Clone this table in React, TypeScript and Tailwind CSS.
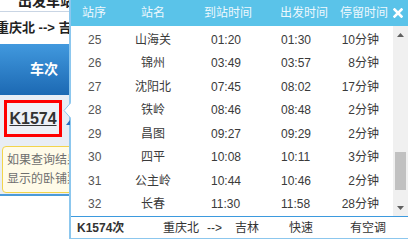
import React from "react";

const rows = [
  ["25", "山海关", "01:20", "01:30", "10分钟"],
  ["26", "锦州", "03:49", "03:57", "8分钟"],
  ["27", "沈阳北", "07:45", "08:02", "17分钟"],
  ["28", "铁岭", "08:46", "08:48", "2分钟"],
  ["29", "昌图", "09:27", "09:29", "2分钟"],
  ["30", "四平", "10:08", "10:11", "3分钟"],
  ["31", "公主岭", "10:44", "10:46", "2分钟"],
  ["32", "长春", "11:30", "11:58", "28分钟"],
];

const font = { fontFamily: '"Liberation Sans", "Noto Sans CJK SC", sans-serif' };

export default function App() {
  return (
    <div className="relative w-[408px] h-[240px] overflow-hidden bg-white" style={font}>
      {/* page behind */}
      <div className="w-[70px] flex flex-col">
        <div className="h-[11px] overflow-hidden bg-white">
          <div className="mt-[-7px] ml-[18px] whitespace-nowrap text-[14px] leading-[16px] font-bold text-[#222]">出发车站：</div>
        </div>
        <div className="h-px bg-[#c9d5e4]" />
        <div className="h-[32px] flex items-center bg-white">
          <div className="ml-[-4px] whitespace-nowrap text-[13px] font-bold text-[#222]">重庆北 --&gt; 吉林</div>
        </div>
        <div className="h-[51px] flex items-center justify-center bg-gradient-to-b from-[#4199de] to-[#1c69b3]">
          <span className="text-[14px] font-bold text-white pl-[18px]">车次</span>
        </div>
        <div className="h-[99px] bg-[#e8edf5] flex flex-col pt-[5px]">
          <div className="ml-[4px] w-[58px] h-[37px] border-[3px] border-[#ff0000] bg-[#eef1f7] flex items-center justify-center">
            <span className="text-[16px] font-bold underline text-[#333]">K1574</span>
          </div>
          <div className="mt-[9px] ml-[2px] w-[90px] h-[47px] border border-[#f2d44c] rounded-[4px] bg-[#fffbe8] pl-[4px] pt-[4px] text-[12px] leading-[19px] text-[#6f6f6f] whitespace-nowrap">
            <div>如果查询结果</div>
            <div>显示的卧铺票</div>
          </div>
        </div>
        <div className="h-[2px] bg-[#4b9bd9]" />
      </div>

      {/* popup */}
      <div className="absolute left-[69px] top-0 w-[339px] h-[239px] border-l-2 border-b border-[#8cc7ee] bg-white flex flex-col text-[12px]">
        <div className="h-[26px] bg-[#5ac3e9] flex items-center text-[#eef8fd] whitespace-nowrap">
          <div className="w-[11px]" />
          <div className="w-[59px]">站序</div>
          <div className="w-[63px]">站名</div>
          <div className="w-[76px]">到站时间</div>
          <div className="w-[60px]">出发时间</div>
          <div className="w-[53px]">停留时间</div>
          <svg width="10" height="10" viewBox="0 0 10 10">
            <path d="M1.5 1.5 L8.5 8.5 M8.5 1.5 L1.5 8.5" stroke="#fff" strokeWidth="2.6" strokeLinecap="square" />
          </svg>
        </div>
        <div className="h-[190px] flex">
          <div className="w-[322px] overflow-hidden">
            <div className="mt-[2px]">
              {rows.map((r) => (
                <div key={r[0]} className="h-[23.5px] flex items-center text-[#3a3a3a] whitespace-nowrap">
                  <div className="w-[49px] pl-[17px] text-[#555]">{r[0]}</div>
                  <div className="w-[66px] text-center">{r[1]}</div>
                  <div className="w-[70px] pl-[25px]">{r[2]}</div>
                  <div className="w-[70px] pl-[25px]">{r[3]}</div>
                  <div className="w-[53px] text-right">{r[4]}</div>
                </div>
              ))}
            </div>
          </div>
          <div className="w-[15px] bg-[#f0f0f0] flex flex-col">
            <div className="h-[17px] flex items-center justify-center">
              <svg width="7" height="4" viewBox="0 0 7 4"><path d="M0 4 L3.5 0 L7 4 Z" fill="#606060" /></svg>
            </div>
            <div className="flex-1 pt-[109px]">
              <div className="h-[38px] mx-[2px] bg-[#c1c1c1]" />
            </div>
            <div className="h-[17px] flex items-center justify-center">
              <svg width="7" height="4" viewBox="0 0 7 4"><path d="M0 0 L7 0 L3.5 4 Z" fill="#606060" /></svg>
            </div>
          </div>
        </div>
        <div className="h-px bg-[#3d9ade]" />
        <div className="h-[21px] flex items-center text-[#333] whitespace-nowrap">
          <div className="w-[6px]" />
          <div className="w-[86px] font-bold">K1574次</div>
          <div className="w-[44px]">重庆北</div>
          <div className="w-[28px]">--&gt;</div>
          <div className="w-[54px]">吉林</div>
          <div className="w-[61px]">快速</div>
          <div>有空调</div>
        </div>
      </div>

      {/* callout pointer */}
      <svg className="absolute left-[63px] top-[102px]" width="9" height="17" viewBox="0 0 9 17">
        <path d="M8 0.5 L1 8.5 L8 16.5" fill="#fff" stroke="#8cc7ee" strokeWidth="1" />
        <rect x="8" y="0" width="1" height="17" fill="#fff" />
      </svg>
      <svg className="absolute left-[66px] top-[120px]" width="4" height="5" viewBox="0 0 4 5">
        <path d="M4 0 L4 5 L0 5 Z" fill="#2a6fc0" />
      </svg>
    </div>
  );
}
